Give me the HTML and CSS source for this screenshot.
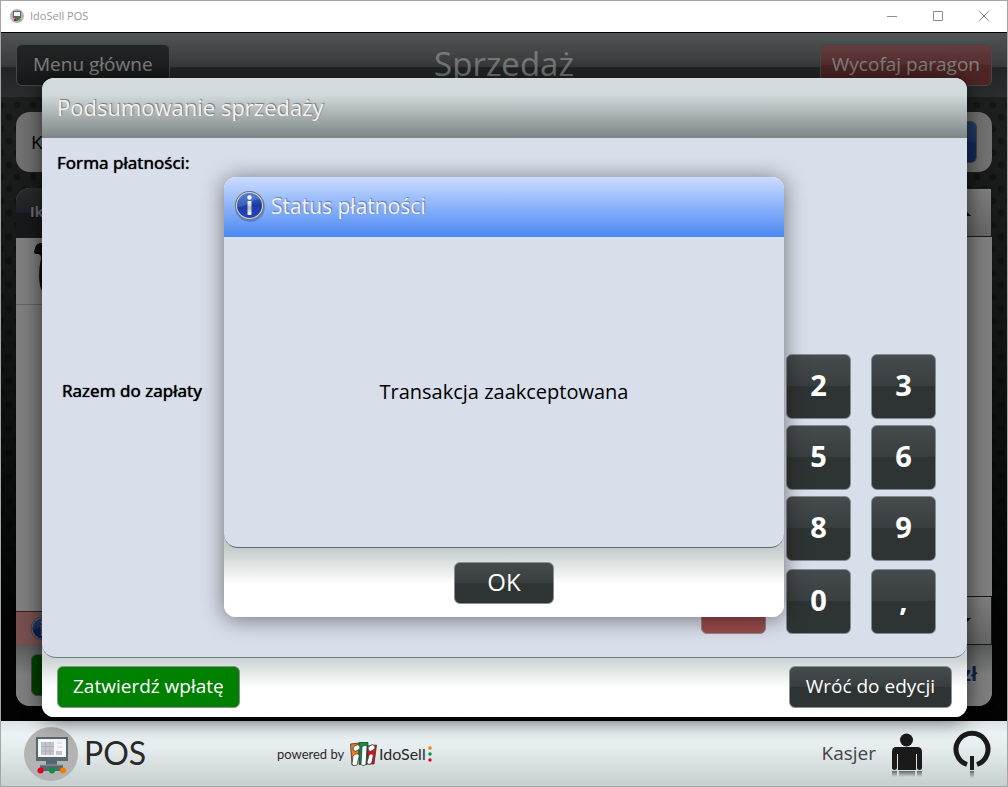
FILE: index.html
```html
<!DOCTYPE html>
<html lang="pl">
<head>
  <meta charset="utf-8">
  <title>IdoSell POS</title>
  <link rel="stylesheet" href="styles.css">
</head>
<body>
  <div class="window">
    <div class="titlebar">
      <svg class="app-icon" width="14" height="14" viewBox="0 0 14 14">
        <circle cx="7" cy="7" r="7" fill="#b4b4b4"/>
        <path d="M3 2h8v7H3z" fill="#55676f"/>
        <path d="M4 3h6v4H4z" fill="#f4f5fa"/>
        <path d="M5 9h5v2H5z" fill="#55676f"/>
        <path d="M4 10h2v2H4z" fill="#e2001a"/>
        <path d="M6 10h2v2H6z" fill="#009640"/>
        <path d="M9 10h2v2H9z" fill="#ef7d00"/>
      </svg>
      <span class="titlebar-text">IdoSell POS</span>
      <button class="win-btn" aria-label="Minimalizuj">
        <svg width="12" height="12" viewBox="0 0 12 12"><path d="M1 6.500h10" stroke="#8c8c8c" fill="none"/></svg>
      </button>
      <button class="win-btn" aria-label="Maksymalizuj">
        <svg width="12" height="12" viewBox="0 0 12 12"><path d="M1.500 1.500h9v9h-9z" stroke="#8c8c8c" fill="none"/></svg>
      </button>
      <button class="win-btn" aria-label="Zamknij">
        <svg width="12" height="12" viewBox="0 0 12 12"><path d="M1 1l10 10M11 1L1 11" stroke="#8c8c8c" fill="none"/></svg>
      </button>
    </div>

    <div class="stage">
      <header class="topbar">
        <div><button class="btn">Menu główne</button></div>
        <h1 class="page-title">Sprzedaż</h1>
        <div><button class="btn btn-red">Wycofaj paragon</button></div>
      </header>
      <div class="page">
        <div class="search">
          <span>K</span>
          <button class="btn btn-blue" aria-label="Szukaj"></button>
        </div>
        <div class="list">
          <div class="list-head">Ik</div>
          <div class="list-body">
            <div class="item">
              <svg width="30" height="54" viewBox="0 0 30 54">
                <path d="M6 0C2 1 1 4 1 6c-2 3-1 5 2 5 3 0 4 1 4 5-2 8-3 22 0 30l4 6h19V0z" fill="#181818"/>
              </svg>
            </div>
            <div class="scroller">
              <button class="scroll-btn" aria-label="W górę"><svg width="12" height="6" viewBox="0 0 12 6"><path d="M0 6l6-6 6 6z"/></svg></button>
              <button class="scroll-btn" aria-label="W dół"><svg width="12" height="6" viewBox="0 0 12 6"><path d="M0 0l6 6 6-6z"/></svg></button>
            </div>
          </div>
          <div class="notice">
            <svg width="24" height="24" viewBox="0 0 30 30"><use href="#info"/></svg>
          </div>
          <div class="list-foot">
            <button class="btn btn-green btn-pay" aria-label="Zapłać"></button>
            <strong>zł</strong>
          </div>
        </div>
      </div>

      <div class="overlay">
        <section class="dialog">
          <h2 class="dialog-head">Podsumowanie sprzedaży</h2>
          <div class="dialog-body">
            <div class="payment">
              <p>Forma płatności:</p>
              <p class="total">Razem do zapłaty</p>
            </div>
            <div class="keypad">
              <button class="key" aria-label="1"></button>
              <button class="key">2</button>
              <button class="key">3</button>
              <button class="key" aria-label="4"></button>
              <button class="key">5</button>
              <button class="key">6</button>
              <button class="key" aria-label="7"></button>
              <button class="key">8</button>
              <button class="key">9</button>
              <button class="key key-red" aria-label="Wyczyść"></button>
              <button class="key">0</button>
              <button class="key">,</button>
            </div>
          </div>
          <div class="dialog-foot">
            <button class="btn btn-green">Zatwierdź wpłatę</button>
            <button class="btn">Wróć do edycji</button>
          </div>
        </section>
      </div>
    </div>

    <footer class="footer">
      <svg width="54" height="54" viewBox="0 0 54 54">
        <circle cx="27" cy="27" r="27" fill="#b3b3b3"/>
        <path d="M12 10h32v24H12z" fill="#55676f"/>
        <path d="M14 12h28v18H14z" fill="#f6f7fc"/>
        <path d="M17 15h13v13H17z" fill="#c3c5cb"/>
        <path d="M17 19.500h13M17 24h13M21.500 15v13M26 15v13" stroke="#aeb0b8" fill="none"/>
        <path d="M33 16h5M33 20h5" stroke="#d0d2d8" fill="none"/>
        <path d="M32 24h6v4h-6z" fill="#c3c5cb"/>
        <path d="M22 33h11v5h6v6H16v-6h6z" fill="#55676f"/>
        <path d="M16 38h23" stroke="#8fa0a6" fill="none"/>
        <circle cx="16.500" cy="43.500" r="3" fill="#e2001a"/>
        <circle cx="28" cy="43.500" r="3" fill="#009640"/>
        <circle cx="39" cy="43.500" r="3" fill="#ef7d00"/>
      </svg>
      <span class="brand">POS</span>
      <span class="powered">powered by</span>
      <svg width="27" height="24" viewBox="0 0 27 24">
        <path d="M.5 2l9-1v7L6 23H2z" fill="#ef7d1a" stroke="#333" stroke-width=".8"/>
        <path d="M9 .5h9l-1 22H9z" fill="#009640" stroke="#333" stroke-width=".8"/>
        <path d="M18 4l8.500-1L24 22h-7z" fill="#e2101a" stroke="#333" stroke-width=".8"/>
        <g fill="#fff" stroke="#333" stroke-width=".8">
          <ellipse cx="6.500" cy="6" rx="3.800" ry="2.800" transform="rotate(-35 6.500 6)"/>
          <path d="M3 14c2-3 7-3 6 1l-2 8c-1 1-5 1-5-1z"/>
          <path d="M12 5c1-2 5-2 5 0l-1 17c-1 2-5 2-5 0z"/>
          <ellipse cx="21.500" cy="6" rx="3.800" ry="2.800" transform="rotate(-35 21.500 6)"/>
          <path d="M19 13c2-2 5-1 4 2l-1 5c-1 3-5 3-5 0z"/>
        </g>
      </svg>
      <span class="idosell">IdoSell</span>
      <svg class="dots" width="4" height="16" viewBox="0 0 4 16">
        <circle cx="2" cy="2" r="1.700" fill="#ef7d00"/>
        <circle cx="2" cy="8" r="1.700" fill="#009640"/>
        <circle cx="2" cy="14" r="1.700" fill="#e2001a"/>
      </svg>
      <span class="cashier">Kasjer</span>
      <svg class="user" width="32" height="46" viewBox="0 0 32 46">
        <defs>
          <linearGradient id="fade" x2="0" y2="1"><stop stop-color="#1a1a1a" stop-opacity=".6"/><stop offset="1" stop-color="#1a1a1a" stop-opacity="0"/></linearGradient>
        </defs>
        <circle cx="15.500" cy="7" r="6.500" fill="#1a1a1a"/>
        <path d="M5 14h21q5 0 5 5v16q0 2-2.500 2t-2.500-2V21h-1v16H7V21H6v14q0 2-2.500 2T1 35V19q0-5 4-5z" fill="#1a1a1a"/>
        <path d="M1 38h5v6H1zM8 38h16v6H8zM26 38h5v6h-5z" fill="url(#fade)"/>
      </svg>
      <button class="power" aria-label="Wyloguj">
        <svg width="38" height="48" viewBox="0 0 38 48">
          <path d="M14 34.500A16 16 0 1 1 24 34.500" fill="none" stroke="#1a1a1a" stroke-width="5"/>
          <path d="M17 26h4v14h-4z" fill="#1a1a1a"/>
          <path d="M17 41h4v7h-4z" fill="url(#fade)"/>
        </svg>
      </button>
    </footer>

    <div class="overlay overlay-top">
      <section class="popup" role="dialog" aria-labelledby="popup-title">
        <div class="popup-head">
          <svg width="32" height="32" viewBox="0 0 32 32">
            <defs>
              <linearGradient id="blue" x2="0" y2="1"><stop stop-color="#3f6fd0"/><stop offset=".5" stop-color="#1a3c9e"/><stop offset="1" stop-color="#2342cc"/></linearGradient>
              <linearGradient id="silver" x2="0" y2="1"><stop stop-color="#fff"/><stop offset=".5" stop-color="#b8b8b8"/><stop offset="1" stop-color="#fff"/></linearGradient>
            </defs>
            <circle cx="16" cy="17" r="15" fill="#2b4a86" opacity=".35"/>
            <g id="info">
              <circle cx="15.500" cy="15.500" r="14.500" fill="#77726c"/>
              <circle cx="15.500" cy="15.500" r="13.500" fill="#dddad5"/>
              <circle cx="15.500" cy="15.500" r="12.500" fill="url(#blue)"/>
              <path d="M3.200 17A12.300 12.300 0 0 1 26 9C18 9 13 17 3.200 17z" fill="#7ba0ea" opacity=".35"/>
              <circle cx="15.500" cy="7.500" r="2.200" fill="#fff"/>
              <rect x="13.500" y="11" width="4" height="14" rx=".8" fill="url(#silver)"/>
            </g>
          </svg>
          <h2 id="popup-title">Status płatności</h2>
        </div>
        <p class="popup-body">Transakcja zaakceptowana</p>
        <div class="popup-foot">
          <button class="btn btn-ok">OK</button>
        </div>
      </section>
    </div>
  </div>
</body>
</html>
```

FILE: styles.css
```css
* {
  box-sizing: border-box;
}
body {
  margin: 0;
  font-family: "Open Sans", "Noto Sans", sans-serif;
  font-size: 16px;
  color: #000;
}
h1, h2, p {
  margin: 0;
  font-weight: normal;
}
button {
  font-family: inherit;
  cursor: pointer;
}
svg {
  display: block;
  flex: none;
}

/* Window frame */
.window {
  position: relative;
  display: flex;
  flex-direction: column;
  min-height: 100vh;
  border: 1px solid #a5a5a5;
  background: #000;
}
.titlebar {
  display: flex;
  align-items: center;
  height: 32px;
  padding: 0 0 2px 9px;
  background: #fff;
  border-bottom: 1px solid #000;
  font-size: 11px;
  color: #999;
}
.titlebar-text {
  flex: 1;
  padding-left: 6px;
}
.win-btn {
  display: flex;
  justify-content: center;
  width: 46px;
  padding: 0;
  border: none;
  background: none;
}

/* Buttons */
.btn {
  height: 42px;
  padding: 0 16px 2px;
  border: 1px solid #8b8f90;
  border-radius: 6px;
  background: linear-gradient(#464b4d, #383d3f 50%, #2e3333 50%, #2e3333);
  color: #fff;
  font-size: 19px;
  line-height: 24px;
}
.btn-green {
  padding: 0 15px 2px;
  background: #008000;
}
.btn-pay {
  width: 120px;
}
.btn-red {
  padding: 0 11px 2px;
  background: linear-gradient(#c67d7d, #ab5c5c 50%, #a04a4a 50%, #a04a4a);
}
.btn-blue {
  width: 120px;
  background: linear-gradient(#4f7fd0, #3a69bd 50%, #2456b8 50%, #2456b8);
}
.btn-ok {
  width: 100px;
  font-size: 24px;
}

/* Sale page */
.stage {
  position: relative;
  flex: 1;
  display: flex;
  flex-direction: column;
  background-color: #1c2020;
  background-image: radial-gradient(circle, rgba(0, 0, 0, .3) 3px, transparent 4px), radial-gradient(circle, rgba(0, 0, 0, .3) 3px, transparent 4px), linear-gradient(#404545, #2c3030 35%, #060707 85%);
  background-size: 16px 24px, 16px 24px, 100% 100%;
  background-position: 0 0, 8px 12px, 0 0;
}
.topbar {
  display: grid;
  grid-template-columns: 1fr auto 1fr;
  height: 64px;
  padding: 11px 15px;
  background: linear-gradient(#a0aaac, #6e7576 53%, #444a4b 54%, #545c5e);
}
.topbar div:last-child {
  text-align: right;
}
.topbar div:first-child .btn {
  background: linear-gradient(#464b4d, #2e3333);
}
.page-title {
  color: #f0f0f0;
  font-size: 33px;
  line-height: 40px;
}
.page {
  flex: 1;
  display: flex;
  flex-direction: column;
  gap: 16px;
  padding: 15px;
}
.search {
  display: flex;
  align-items: center;
  justify-content: space-between;
  height: 60px;
  padding: 0 15px;
  border-radius: 14px;
  background: #e4e4e4;
  font-size: 19px;
}
.list {
  flex: 1;
  display: flex;
  flex-direction: column;
  overflow: hidden;
  border-radius: 14px 0 14px 14px;
  background: #fff;
}
.list-head {
  height: 50px;
  padding-left: 14px;
  background: linear-gradient(#55585c, #404248 50%, #303234 50%, #303234);
  color: #d8d8e8;
  font-size: 14px;
  font-weight: bold;
  line-height: 48px;
  margin-right: 46px;
}
.list-body {
  flex: 1;
  display: flex;
  justify-content: space-between;
}
.item {
  flex: 1;
  height: 67px;
  padding: 5px 18px;
  border-bottom: 1px solid #c8c8c8;
}
.scroller {
  display: flex;
  flex-direction: column;
  justify-content: space-between;
  margin: -50px 0 -34px;
}
.scroll-btn {
  display: flex;
  align-items: center;
  width: 46px;
  height: 49px;
  padding: 0 12px;
  border: 1px solid #333;
  background: linear-gradient(#fff, #ccc);
}
.notice {
  height: 34px;
  margin-right: 46px;
  padding: 4px 14px;
  border-top: 1px solid #703c3c;
  background: #f0a0a0;
}
.list-foot {
  display: flex;
  justify-content: space-between;
  height: 61px;
  padding: 9px 15px;
  background: linear-gradient(#b4b8b8, #fff 50%);
  color: #24459a;
  font-size: 20px;
  line-height: 40px;
}

/* Sale summary */
.overlay {
  position: absolute;
  inset: 0;
  display: flex;
  padding: 45px 40px 4px 41px;
  background: rgba(0, 0, 0, .5);
}
.dialog {
  flex: 1;
  display: flex;
  flex-direction: column;
  border-radius: 12px;
  background: #fff;
  box-shadow: 0 2px 22px rgba(0, 0, 0, .65);
}
.dialog-head {
  height: 60px;
  padding-left: 15px;
  border-radius: 12px 12px 0 0;
  background: linear-gradient(#d3dbde, #d1d9dc 28%, #7d8484);
  color: #f2f2f2;
  font-size: 22px;
  line-height: 58px;
  text-shadow: 1px -1px 1px #6f7878;
}
.dialog-body {
  position: relative;
  flex: 1;
  display: flex;
  justify-content: space-between;
  padding: 14px 31px 23px 15px;
  border-bottom: 1px solid #6f7d82;
  border-radius: 0 0 14px 14px;
  background: #d8deea;
}
.payment {
  font-family: "Noto Sans", sans-serif;
  font-size: 17px;
  line-height: 22px;
  text-shadow: 0 0 1px #000;
}
.total {
  padding: 206px 5px 0;
}
.keypad {
  display: grid;
  grid-template-columns: repeat(3, 65px);
  grid-template-rows: 65px 65px 67px 65px;
  gap: 6px 20px;
  align-content: end;
}
.key {
  height: 65px;
  padding: 0 0 4px;
  border: 1px solid #858b8e;
  border-radius: 6px;
  background: linear-gradient(#464b4d, #383d3f 50%, #2e3333 50%, #2e3333);
  color: #fff;
  font-size: 29px;
  font-weight: bold;
}
.key-red {
  background: #9c4b4b;
}
.dialog-foot {
  display: flex;
  justify-content: space-between;
  margin-top: -14px;
  padding: 22px 15px 9px;
  border-radius: 0 0 12px 12px;
  background: linear-gradient(#ccd3d4 14px, #fff 44px);
}

/* Footer */
.footer {
  display: flex;
  align-items: center;
  height: 65px;
  padding: 0 16px 0 23px;
  background: linear-gradient(#dce3e6, #ebf3f6 20%, #e6edef 40%, #c6cfcf);
  color: #2a2a2a;
}
.brand {
  width: 199px;
  padding: 0 0 2px 6px;
  font-family: Lato, sans-serif;
  font-size: 32px;
}
.powered {
  width: 73px;
  font-family: Lato, sans-serif;
  font-size: 13px;
}
.idosell {
  padding: 0 2px;
  font-family: Lato, sans-serif;
  font-size: 16px;
}
.cashier {
  margin-left: auto;
  padding: 0 15px 2px 0;
  color: #444;
  font-size: 19px;
}
.user {
  margin: 4px 30px 0 0;
}
.power {
  padding: 0;
  border: none;
  background: none;
}

/* Payment status */
.overlay-top {
  align-items: center;
  justify-content: center;
  padding: 7px 0 0;
  background: none;
}
.popup {
  width: 560px;
  max-width: 90%;
  border-radius: 12px;
  background: #fff;
  box-shadow: 0 2px 22px rgba(0, 0, 0, .5);
}
.popup-head {
  display: flex;
  align-items: center;
  gap: 5px;
  height: 60px;
  padding: 0 0 2px 10px;
  border-radius: 12px 12px 0 0;
  background: linear-gradient(#cbdcff, #4b88f3);
}
.popup-head h2 {
  color: #f2f2f2;
  font-size: 21px;
  line-height: 30px;
  text-shadow: 1px -1px 1px #5f7cb0;
}
.popup-body {
  position: relative;
  display: flex;
  align-items: center;
  justify-content: center;
  height: 311px;
  padding-bottom: 2px;
  border-bottom: 1px solid #5f6b70;
  border-radius: 0 0 14px 14px;
  background: #d8deea;
  font-size: 20px;
}
.popup-foot {
  display: flex;
  justify-content: center;
  margin-top: -14px;
  padding: 28px 0 13px;
  border-radius: 0 0 12px 12px;
  background: linear-gradient(#c5cccc 14px, #fff 50px);
}
```
